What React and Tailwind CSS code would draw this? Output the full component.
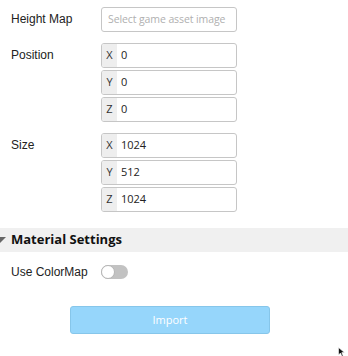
import React from "react";

const labelFont = { fontFamily: '"Liberation Sans", Arial, sans-serif' };
const uiFont = { fontFamily: '"Open Sans", "Noto Sans", sans-serif' };

const AxisInput = ({ axis, value }) => (
    <div className="flex h-[25px] w-[136px] items-stretch overflow-hidden rounded-[3px] border border-[#c6c6c6] bg-white">
        <span
            className="flex w-[15px] items-center justify-center bg-[#eeeeee] text-[11px] text-[#333]"
            style={uiFont}
        >
            {axis}
        </span>
        <span className="flex items-center pl-[4px] text-[11px] text-[#222]" style={uiFont}>
            {value}
        </span>
    </div>
);

const FieldRow = ({ label, children, className = "" }) => (
    <div className={`flex ${className}`}>
        <div className="flex h-[24px] w-[101px] items-center pl-[11px] text-[12px] text-[#222]" style={labelFont}>
            {label}
        </div>
        <div className="flex flex-col gap-[2px]">{children}</div>
    </div>
);

export default function App() {
    return (
        <div className="relative h-[356px] w-[348px] overflow-hidden bg-white">
            <div className="pt-[7px]">
                <FieldRow label="Height Map">
                    <div
                        className="flex h-[25px] w-[136px] items-center whitespace-nowrap rounded-[3px] border border-[#c6c6c6] pl-[6px] text-[10.5px] tracking-[-0.1px] text-[#b0b0b0]"
                        style={uiFont}
                    >
                        Select game asset image
                    </div>
                </FieldRow>

                <FieldRow label="Position" className="mt-[11px]">
                    <AxisInput axis="X" value="0" />
                    <AxisInput axis="Y" value="0" />
                    <AxisInput axis="Z" value="0" />
                </FieldRow>

                <FieldRow label="Size" className="mt-[11px]">
                    <AxisInput axis="X" value="1024" />
                    <AxisInput axis="Y" value="512" />
                    <AxisInput axis="Z" value="1024" />
                </FieldRow>
            </div>

            {/* Section header */}
            <div className="mt-[16px] flex h-[24px] items-center bg-[#f0f0f0]">
                <svg width="8" height="8" viewBox="0 0 8 8" className="ml-[-1px]">
                    <path d="M0 1 L7 1 L0 8 Z" fill="#666" />
                </svg>
                <span className="ml-[4px] text-[13px] font-bold text-[#111]" style={uiFont}>
                    Material Settings
                </span>
            </div>

            <div className="mt-[12px] flex h-[16px] items-center">
                <div className="w-[101px] pl-[11px] text-[12px] text-[#222]" style={labelFont}>
                    Use ColorMap
                </div>
                <div className="flex h-[14px] w-[27px] items-center rounded-full bg-[#c2c2c2]">
                    <div className="h-[14px] w-[14px] rounded-full border border-[#b5b5b5] bg-white" />
                </div>
            </div>

            <div className="mt-[26px] flex pl-[70px]">
                <button
                    className="h-[28px] w-[200px] rounded-[3px] border border-[#86c6ea] bg-[#96d6fb] text-[11px] text-white"
                    style={uiFont}
                >
                    Import
                </button>
            </div>

            {/* cursor */}
            <svg width="8" height="10" viewBox="0 0 8 10" className="absolute left-[338px] top-[347px]">
                <path d="M0.5 0.5 L0.5 8 L2.5 6 L4 9.5 L5.2 9 L3.8 5.6 L6.5 5.6 Z" fill="#111" stroke="#fff" strokeWidth="0.6" />
            </svg>
        </div>
    );
}
